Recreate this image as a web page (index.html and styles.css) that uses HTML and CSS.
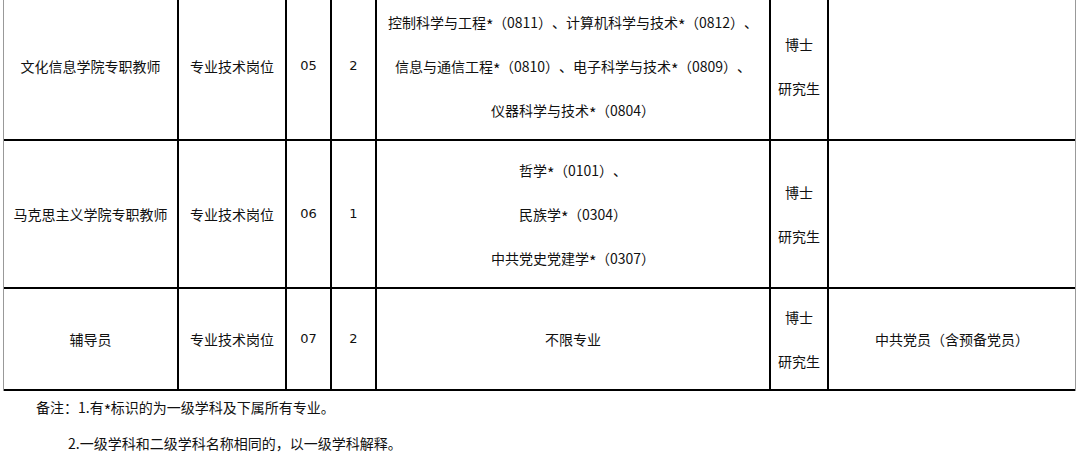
FILE: index.html
```html
<!DOCTYPE html>
<html lang="zh-CN">
<head>
<meta charset="utf-8">
<title>岗位表</title>
<link rel="stylesheet" href="styles.css">
</head>
<body>
<div class="page">
  <div class="grid">
    <div class="cell">文化信息学院专职教师</div>
    <div class="cell">专业技术岗位</div>
    <div class="cell num">05</div>
    <div class="cell num">2</div>
    <div class="cell multi">
      <div>控制科学与工程<span class="star">*</span>（0811）、计算机科学与技术<span class="star">*</span>（0812）、</div>
      <div>信息与通信工程<span class="star">*</span>（0810）、电子科学与技术<span class="star">*</span>（0809）、</div>
      <div>仪器科学与技术<span class="star">*</span>（0804）</div>
    </div>
    <div class="cell multi"><div>博士</div><div>研究生</div></div>
    <div class="cell"></div>

    <div class="cell">马克思主义学院专职教师</div>
    <div class="cell">专业技术岗位</div>
    <div class="cell num">06</div>
    <div class="cell num">1</div>
    <div class="cell multi">
      <div>哲学<span class="star">*</span>（0101）、</div>
      <div>民族学<span class="star">*</span>（0304）</div>
      <div>中共党史党建学<span class="star">*</span>（0307）</div>
    </div>
    <div class="cell multi"><div>博士</div><div>研究生</div></div>
    <div class="cell"></div>

    <div class="cell">辅导员</div>
    <div class="cell">专业技术岗位</div>
    <div class="cell num">07</div>
    <div class="cell num">2</div>
    <div class="cell">不限专业</div>
    <div class="cell multi"><div>博士</div><div>研究生</div></div>
    <div class="cell">中共党员（含预备党员）</div>
  </div>
  <div class="notes">
    <p class="note first">备注：1.有<span class="star">*</span>标识的为一级学科及下属所有专业。</p>
    <p class="note second">2.一级学科和二级学科名称相同的，以一级学科解释。</p>
  </div>
</div>
</body>
</html>
```
FILE: styles.css
```css
html, body {
  margin: 0;
  padding: 0;
  background: #fff;
}
body {
  font-family: "Noto Sans CJK SC", "Noto Sans", sans-serif;
  font-size: 14px;
  color: #111;
  width: 1080px;
  height: 453px;
  overflow: hidden;
  text-spacing-trim: space-all;
}
.page {
  padding-left: 3px;
  margin-top: -9px;
}
.grid {
  display: grid;
  width: 1073px;
  box-sizing: border-box;
  grid-template-columns: 173px 106px 43px 43px 392px 56px 246px;
  grid-template-rows: 146px 146px 100px;
  column-gap: 2px;
  row-gap: 2px;
  background: #000;
  border-left: 1px solid #999;
  border-right: 1px solid #999;
  padding: 2px 0;
}
.cell {
  background: #fff;
  display: flex;
  flex-direction: column;
  align-items: center;
  justify-content: center;
  text-align: center;
  line-height: 44px;
  white-space: nowrap;
}
.num {
  font-family: "DejaVu Sans", "Noto Sans", sans-serif;
  font-size: 13px;
}
.star {
  display: inline-block;
  width: 7px;
  text-align: center;
  font-size: 16px;
  line-height: 1;
  position: relative;
  top: 4px;
}
.notes {
  margin-top: -2px;
}
.note {
  margin: 0;
  line-height: 36px;
  white-space: nowrap;
}
.note.first {
  padding-left: 33px;
}
.note.second {
  padding-left: 65px;
}
```
